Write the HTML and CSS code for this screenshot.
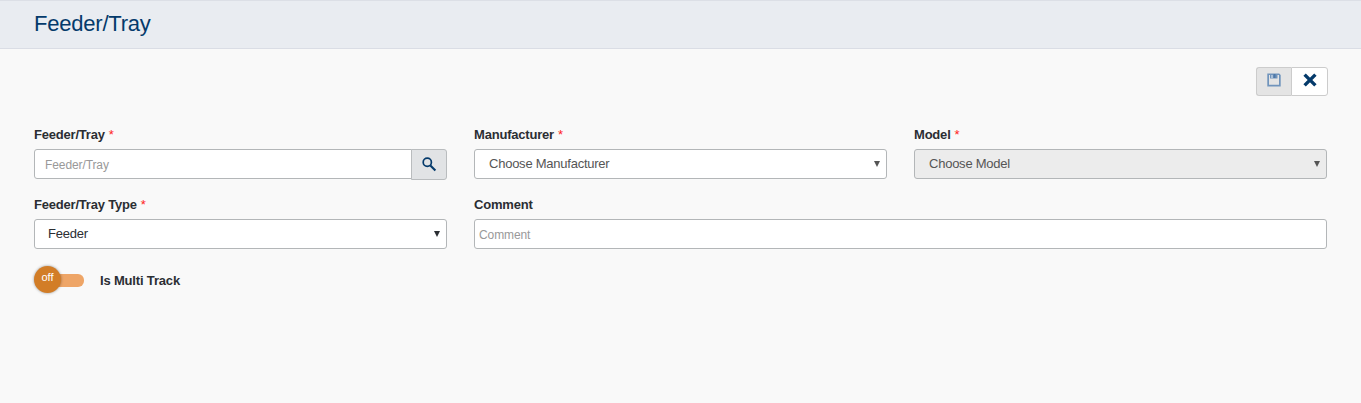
FILE: index.html
```
<!DOCTYPE html>
<html lang="en">
<head>
<meta charset="utf-8">
<title>Feeder/Tray</title>
<link rel="stylesheet" href="styles.css">
</head>
<body>
<header class="page-header"><h1 class="page-title">Feeder/Tray</h1></header>
<main class="content">
  <div class="toolbar">
    <button class="tool tool-save" disabled aria-label="Save">
      <svg width="14" height="14" viewBox="0 0 14 14"><path fill="#7094bc" fill-rule="evenodd" d="M.3.500h11.900l1.500 1.500v11.500H.3zM2 2v9.800h10V2z"/><path fill="#7094bc" d="M3 1h7.500v4.500H3z"/><path fill="#a9bfd8" d="M4 2h2v3H4z"/><path fill="#4d78a8" d="M6.500 1h2v4h-2z"/></svg>
    </button>
    <button class="tool tool-close" aria-label="Close">
      <svg width="14" height="14" viewBox="0 0 14 14"><path fill="none" stroke="#043a6b" stroke-width="3.400" d="M1.600 1.600l10.800 10.800M12.400 1.600L1.600 12.400"/></svg>
    </button>
  </div>
  <form class="form">
    <div class="field">
      <label class="label">Feeder/Tray <span class="req">*</span></label>
      <div class="group">
        <input class="control control-search" placeholder="Feeder/Tray">
        <button type="button" class="search" aria-label="Search">
          <svg width="15" height="15" viewBox="0 0 15 15"><circle cx="5.300" cy="5.300" r="4.100" fill="none" stroke="#043a6b" stroke-width="1.700"/><path d="M8.400 8.400l5 5" stroke="#043a6b" stroke-width="2.100"/></svg>
        </button>
      </div>
    </div>
    <div class="field">
      <label class="label">Manufacturer <span class="req">*</span></label>
      <div class="control select select-muted"><span class="value">Choose Manufacturer</span><span class="arrow"></span></div>
    </div>
    <div class="field">
      <label class="label">Model <span class="req">*</span></label>
      <div class="control select select-muted select-disabled"><span class="value">Choose Model</span><span class="arrow"></span></div>
    </div>
    <div class="field">
      <label class="label">Feeder/Tray Type <span class="req">*</span></label>
      <div class="control select select-type"><span class="value">Feeder</span><span class="arrow"></span></div>
    </div>
    <div class="field field-wide">
      <label class="label">Comment</label>
      <input class="control control-comment" placeholder="Comment">
    </div>
  </form>
  <div class="toggle">
    <span class="knob">off</span><span class="track"></span>
    <span class="toggle-label">Is Multi Track</span>
  </div>
</main>
</body>
</html>
```
FILE: styles.css
```
* { box-sizing: border-box; }
body {
  margin: 0;
  min-height: 403px;
  background: #f9f9f9;
  font-family: "Liberation Sans", Arial, sans-serif;
  font-size: 13px;
  color: #2b2e33;
}
.page-header {
  height: 49px;
  padding: 10px 34px 0;
  background: #e9ecf1;
  border-top: 1px solid #dcdfe6;
  border-bottom: 1px solid #dadde5;
}
.page-title {
  margin: 0;
  font-size: 22px;
  line-height: 26px;
  font-weight: 400;
  letter-spacing: -.22px;
  color: #043a6b;
}
.content { padding: 18px 34px 0; }
.toolbar {
  display: flex;
  justify-content: flex-end;
  margin-right: -1px;
}
.tool {
  display: flex;
  justify-content: center;
  height: 29px;
  padding: 5px 0 0;
  border: 1px solid #ccc;
}
.tool-save {
  width: 35px;
  background: #e4e4e4;
  border-right: 0;
  border-radius: 3px 0 0 3px;
}
.tool-close {
  width: 37px;
  background: #fff;
  border-radius: 0 3px 3px 0;
}
.form {
  display: grid;
  grid-template-columns: repeat(3, 413px);
  column-gap: 27px;
  margin-top: 31px;
}
.field { height: 70px; }
.field-wide { grid-column: 2 / 4; }
.label {
  display: block;
  height: 22px;
  line-height: 15px;
  font-weight: 700;
  letter-spacing: -.2px;
}
.req {
  margin-left: .5px;
  font-weight: 400;
  color: #f22;
}
.control {
  display: block;
  width: 100%;
  height: 30px;
  border: 1px solid #b3b6b8;
  border-radius: 3px;
  background: #fff;
  font: 12px "Liberation Sans", Arial, sans-serif;
  letter-spacing: -.1px;
  outline: 0;
}
.control::placeholder { color: #999; }
.group { display: flex; }
.control-search {
  width: 378px;
  padding: 2px 10px 0;
  border-radius: 3px 0 0 3px;
}
.control-comment { padding: 2px 4px 0; }
.search {
  width: 36px;
  height: 31px;
  margin-left: -1px;
  padding: 7px 0 0 10px;
  display: flex;
  background: #e1e3e5;
  border: 1px solid #b9bcbe;
  border-radius: 0 3px 3px 0;
}
.search svg { flex: none; }
.select {
  display: flex;
  justify-content: space-between;
  padding: 0 6px 0 14px;
  font-size: 13px;
  line-height: 27px;
  letter-spacing: -.24px;
  color: #2b2e33;
}
.select-type { padding-left: 13px; }
.select-muted { color: #555; }
.select-disabled { background: #ececec; }
.arrow {
  width: 6px;
  height: 6px;
  margin-top: 11px;
  background: currentColor;
  clip-path: polygon(0 0, 100% 0, 50% 100%);
}
.toggle {
  display: flex;
  align-items: center;
  height: 28px;
  margin-top: -2px;
}
.knob {
  z-index: 1;
  width: 27px;
  height: 27px;
  border-radius: 50%;
  background: #d27d27;
  box-shadow: 0 0 3px rgba(0, 0, 0, .4);
  color: #fff;
  font-size: 11px;
  line-height: 22px;
  text-align: center;
}
.track {
  width: 31px;
  height: 13px;
  margin: 2px 0 0 -8px;
  border-radius: 6px;
  background: #eea567;
}
.toggle-label {
  margin: 2px 0 0 16px;
  font-weight: 700;
  letter-spacing: -.17px;
}
```
